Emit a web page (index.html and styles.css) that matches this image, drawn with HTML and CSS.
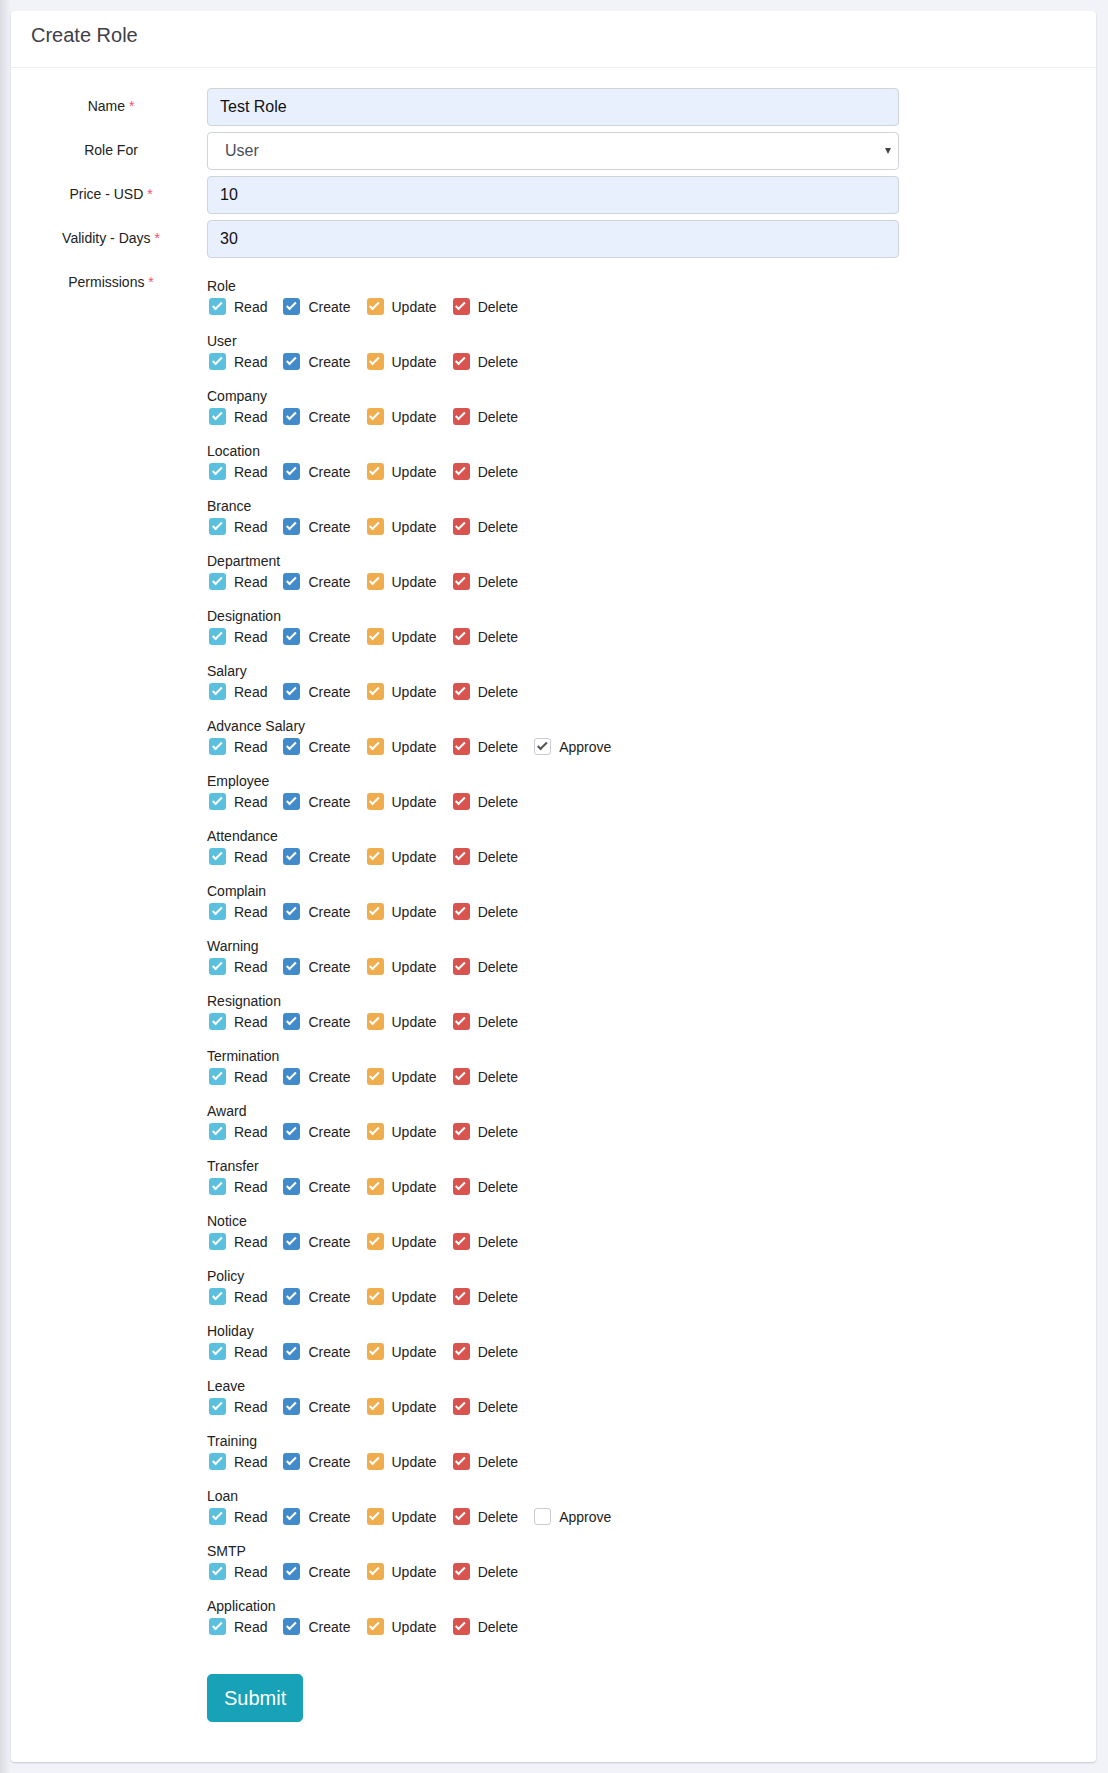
FILE: index.html
```html
<!DOCTYPE html>
<html lang="en">
<head>
<meta charset="utf-8">
<title>Create Role</title>
<link rel="stylesheet" href="styles.css">
</head>
<body>
<div class="page">
  <div class="card">
    <div class="card-header">Create Role</div>
    <div class="card-body">
      <div class="form-grid">
        <div class="label">Name <span class="req">*</span></div>
        <div class="input">Test Role</div>

        <div class="label">Role For</div>
        <div class="input select"><span>User</span><span class="caret"></span></div>

        <div class="label">Price - USD <span class="req">*</span></div>
        <div class="input">10</div>

        <div class="label">Validity - Days <span class="req">*</span></div>
        <div class="input">30</div>

        <div class="label">Permissions <span class="req">*</span></div>
        <div class="perms">
          <div class="group"><div class="group-name">Role</div><div class="checks"><label class="item"><span class="cb read"></span>Read</label><label class="item"><span class="cb create"></span>Create</label><label class="item"><span class="cb update"></span>Update</label><label class="item"><span class="cb delete"></span>Delete</label></div></div>
          <div class="group"><div class="group-name">User</div><div class="checks"><label class="item"><span class="cb read"></span>Read</label><label class="item"><span class="cb create"></span>Create</label><label class="item"><span class="cb update"></span>Update</label><label class="item"><span class="cb delete"></span>Delete</label></div></div>
          <div class="group"><div class="group-name">Company</div><div class="checks"><label class="item"><span class="cb read"></span>Read</label><label class="item"><span class="cb create"></span>Create</label><label class="item"><span class="cb update"></span>Update</label><label class="item"><span class="cb delete"></span>Delete</label></div></div>
          <div class="group"><div class="group-name">Location</div><div class="checks"><label class="item"><span class="cb read"></span>Read</label><label class="item"><span class="cb create"></span>Create</label><label class="item"><span class="cb update"></span>Update</label><label class="item"><span class="cb delete"></span>Delete</label></div></div>
          <div class="group"><div class="group-name">Brance</div><div class="checks"><label class="item"><span class="cb read"></span>Read</label><label class="item"><span class="cb create"></span>Create</label><label class="item"><span class="cb update"></span>Update</label><label class="item"><span class="cb delete"></span>Delete</label></div></div>
          <div class="group"><div class="group-name">Department</div><div class="checks"><label class="item"><span class="cb read"></span>Read</label><label class="item"><span class="cb create"></span>Create</label><label class="item"><span class="cb update"></span>Update</label><label class="item"><span class="cb delete"></span>Delete</label></div></div>
          <div class="group"><div class="group-name">Designation</div><div class="checks"><label class="item"><span class="cb read"></span>Read</label><label class="item"><span class="cb create"></span>Create</label><label class="item"><span class="cb update"></span>Update</label><label class="item"><span class="cb delete"></span>Delete</label></div></div>
          <div class="group"><div class="group-name">Salary</div><div class="checks"><label class="item"><span class="cb read"></span>Read</label><label class="item"><span class="cb create"></span>Create</label><label class="item"><span class="cb update"></span>Update</label><label class="item"><span class="cb delete"></span>Delete</label></div></div>
          <div class="group"><div class="group-name">Advance Salary</div><div class="checks"><label class="item"><span class="cb read"></span>Read</label><label class="item"><span class="cb create"></span>Create</label><label class="item"><span class="cb update"></span>Update</label><label class="item"><span class="cb delete"></span>Delete</label><label class="item"><span class="cb approve checked"></span>Approve</label></div></div>
          <div class="group"><div class="group-name">Employee</div><div class="checks"><label class="item"><span class="cb read"></span>Read</label><label class="item"><span class="cb create"></span>Create</label><label class="item"><span class="cb update"></span>Update</label><label class="item"><span class="cb delete"></span>Delete</label></div></div>
          <div class="group"><div class="group-name">Attendance</div><div class="checks"><label class="item"><span class="cb read"></span>Read</label><label class="item"><span class="cb create"></span>Create</label><label class="item"><span class="cb update"></span>Update</label><label class="item"><span class="cb delete"></span>Delete</label></div></div>
          <div class="group"><div class="group-name">Complain</div><div class="checks"><label class="item"><span class="cb read"></span>Read</label><label class="item"><span class="cb create"></span>Create</label><label class="item"><span class="cb update"></span>Update</label><label class="item"><span class="cb delete"></span>Delete</label></div></div>
          <div class="group"><div class="group-name">Warning</div><div class="checks"><label class="item"><span class="cb read"></span>Read</label><label class="item"><span class="cb create"></span>Create</label><label class="item"><span class="cb update"></span>Update</label><label class="item"><span class="cb delete"></span>Delete</label></div></div>
          <div class="group"><div class="group-name">Resignation</div><div class="checks"><label class="item"><span class="cb read"></span>Read</label><label class="item"><span class="cb create"></span>Create</label><label class="item"><span class="cb update"></span>Update</label><label class="item"><span class="cb delete"></span>Delete</label></div></div>
          <div class="group"><div class="group-name">Termination</div><div class="checks"><label class="item"><span class="cb read"></span>Read</label><label class="item"><span class="cb create"></span>Create</label><label class="item"><span class="cb update"></span>Update</label><label class="item"><span class="cb delete"></span>Delete</label></div></div>
          <div class="group"><div class="group-name">Award</div><div class="checks"><label class="item"><span class="cb read"></span>Read</label><label class="item"><span class="cb create"></span>Create</label><label class="item"><span class="cb update"></span>Update</label><label class="item"><span class="cb delete"></span>Delete</label></div></div>
          <div class="group"><div class="group-name">Transfer</div><div class="checks"><label class="item"><span class="cb read"></span>Read</label><label class="item"><span class="cb create"></span>Create</label><label class="item"><span class="cb update"></span>Update</label><label class="item"><span class="cb delete"></span>Delete</label></div></div>
          <div class="group"><div class="group-name">Notice</div><div class="checks"><label class="item"><span class="cb read"></span>Read</label><label class="item"><span class="cb create"></span>Create</label><label class="item"><span class="cb update"></span>Update</label><label class="item"><span class="cb delete"></span>Delete</label></div></div>
          <div class="group"><div class="group-name">Policy</div><div class="checks"><label class="item"><span class="cb read"></span>Read</label><label class="item"><span class="cb create"></span>Create</label><label class="item"><span class="cb update"></span>Update</label><label class="item"><span class="cb delete"></span>Delete</label></div></div>
          <div class="group"><div class="group-name">Holiday</div><div class="checks"><label class="item"><span class="cb read"></span>Read</label><label class="item"><span class="cb create"></span>Create</label><label class="item"><span class="cb update"></span>Update</label><label class="item"><span class="cb delete"></span>Delete</label></div></div>
          <div class="group"><div class="group-name">Leave</div><div class="checks"><label class="item"><span class="cb read"></span>Read</label><label class="item"><span class="cb create"></span>Create</label><label class="item"><span class="cb update"></span>Update</label><label class="item"><span class="cb delete"></span>Delete</label></div></div>
          <div class="group"><div class="group-name">Training</div><div class="checks"><label class="item"><span class="cb read"></span>Read</label><label class="item"><span class="cb create"></span>Create</label><label class="item"><span class="cb update"></span>Update</label><label class="item"><span class="cb delete"></span>Delete</label></div></div>
          <div class="group"><div class="group-name">Loan</div><div class="checks"><label class="item"><span class="cb read"></span>Read</label><label class="item"><span class="cb create"></span>Create</label><label class="item"><span class="cb update"></span>Update</label><label class="item"><span class="cb delete"></span>Delete</label><label class="item"><span class="cb approve"></span>Approve</label></div></div>
          <div class="group"><div class="group-name">SMTP</div><div class="checks"><label class="item"><span class="cb read"></span>Read</label><label class="item"><span class="cb create"></span>Create</label><label class="item"><span class="cb update"></span>Update</label><label class="item"><span class="cb delete"></span>Delete</label></div></div>
          <div class="group"><div class="group-name">Application</div><div class="checks"><label class="item"><span class="cb read"></span>Read</label><label class="item"><span class="cb create"></span>Create</label><label class="item"><span class="cb update"></span>Update</label><label class="item"><span class="cb delete"></span>Delete</label></div></div>
        </div>

        <div class="submit-row"><button class="btn-submit" type="button">Submit</button></div>
      </div>
    </div>
  </div>
</div>
</body>
</html>
```
FILE: styles.css
```css
html, body {
  margin: 0;
  padding: 0;
}
body {
  background: #f2f3f8 linear-gradient(90deg, #dcdde2 0, #f2f3f8 11px) no-repeat;
  background-size: 12px 100%;
  font-family: "Liberation Sans", Arial, sans-serif;
  color: #212529;
}
.page {
  padding: 11px 12px 11px 11px;
}
.card {
  background: #fff;
  border-radius: 4px;
  box-shadow: 0 1px 2px rgba(0, 0, 0, 0.18);
}
.card-header {
  padding: 12px 20px 20px;
  font-size: 20px;
  line-height: 24px;
  color: #3f4047;
  border-bottom: 1px solid #ebedf2;
}
.card-body {
  padding: 20px 20px 40px;
}
.form-grid {
  display: grid;
  grid-template-columns: 160px 692px;
  column-gap: 16px;
  row-gap: 6px;
}
.label {
  font-size: 14px;
  line-height: 36px;
  text-align: center;
  color: #222;
}
.req {
  color: #f4516c;
}
.input {
  box-sizing: border-box;
  height: 38px;
  border: 1px solid #ced4da;
  border-radius: 4px;
  background: #e8f0fe;
  padding: 0 12px;
  font-size: 16px;
  line-height: 36px;
  color: #111;
}
.select {
  background: #fff;
  color: #495057;
  padding: 0 7px 0 17px;
  display: flex;
  justify-content: space-between;
  align-items: center;
}
.caret {
  width: 0;
  height: 0;
  border-left: 3.5px solid transparent;
  border-right: 3.5px solid transparent;
  border-top: 6px solid #444;
}
.perms {
  padding-top: 12px;
}
.group {
  margin-bottom: 14px;
}
.group-name {
  font-size: 14px;
  line-height: 20px;
  color: #222;
}
.checks {
  display: flex;
  height: 20px;
  margin-top: 1px;
  padding-left: 2px;
}
.item {
  display: flex;
  align-items: flex-start;
  margin-right: 16px;
  font-size: 14px;
  line-height: 20px;
  color: #222;
}
.cb {
  position: relative;
  box-sizing: border-box;
  width: 17px;
  height: 17px;
  margin-top: 0.5px;
  margin-right: 8px;
  border-radius: 3px;
}
.cb::after {
  content: "";
  position: absolute;
  left: 5.5px;
  top: 2.5px;
  width: 3px;
  height: 7.5px;
  border: solid #fff;
  border-width: 0 2.5px 2.5px 0;
  transform: rotate(45deg);
}
.read { background: #5bc0de; }
.create { background: #428bca; }
.update { background: #f0ad4e; }
.delete { background: #d9534f; }
.approve {
  background: #fff;
  border: 1px solid #c9cbd4;
}
.approve::after {
  display: none;
}
.approve.checked::after {
  display: block;
  left: 4.5px;
  top: 1.5px;
  border-color: #555;
  border-width: 0 2px 2px 0;
}
.submit-row {
  grid-column: 2;
  margin-top: 17px;
}
.btn-submit {
  font-family: "Liberation Sans", Arial, sans-serif;
  font-size: 20px;
  line-height: 30px;
  padding: 8px 16px;
  color: #fff;
  background: #17a2b8;
  border: 1px solid #17a2b8;
  border-radius: 4.8px;
  cursor: pointer;
}
```
